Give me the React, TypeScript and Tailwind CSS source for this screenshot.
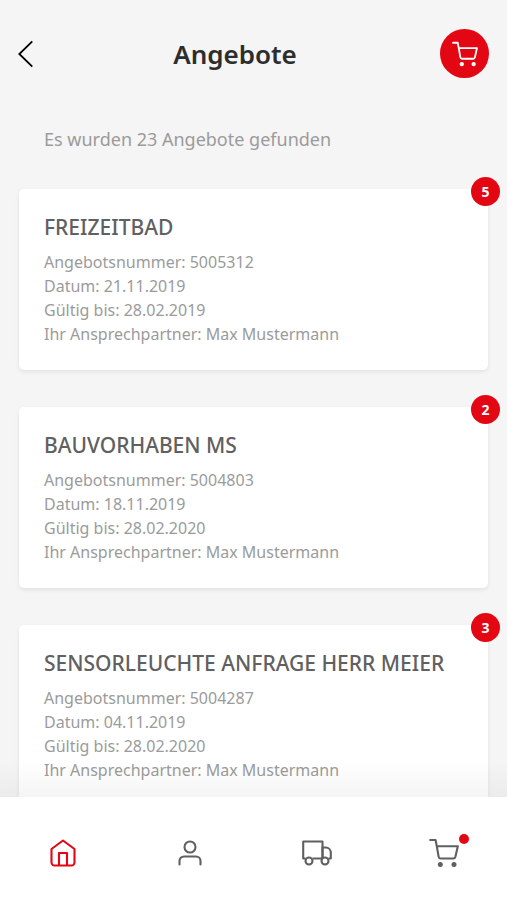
interface Offer {
  title: string;
  number: string;
  date: string;
  validUntil: string;
  contact: string;
  count: number;
}

const offers: Offer[] = [
  {
    title: 'FREIZEITBAD',
    number: '5005312',
    date: '21.11.2019',
    validUntil: '28.02.2019',
    contact: 'Max Mustermann',
    count: 5,
  },
  {
    title: 'BAUVORHABEN MS',
    number: '5004803',
    date: '18.11.2019',
    validUntil: '28.02.2020',
    contact: 'Max Mustermann',
    count: 2,
  },
  {
    title: 'SENSORLEUCHTE ANFRAGE HERR MEIER',
    number: '5004287',
    date: '04.11.2019',
    validUntil: '28.02.2020',
    contact: 'Max Mustermann',
    count: 3,
  },
];

export default function App() {
  return (
    <div className="flex h-screen flex-col bg-[#f5f5f5] font-['Noto_Sans','Open_Sans',sans-serif]">
      <header className="flex shrink-0 items-center px-[18px] pt-[29px]">
        <button className="flex h-12 w-4 shrink-0 items-center text-black" aria-label="Zurück">
          <BackIcon />
        </button>
        <h1 className="flex-1 pr-1 text-center text-[26px] leading-9 font-semibold text-[#2d2d2d]">
          Angebote
        </h1>
        <button
          className="flex size-[49px] items-center justify-center rounded-full bg-[#e30613] text-white"
          aria-label="Warenkorb"
        >
          <CartIcon className="size-[26px]" />
        </button>
      </header>

      <main className="min-h-0 flex-1 overflow-y-auto px-[19px] pt-[47px] [scrollbar-width:none]">
        <p className="px-[25px] text-lg leading-7 text-[#9b9b9b]">
          Es wurden 23 Angebote gefunden
        </p>
        <ul className="mt-9 flex flex-col gap-[37px] pb-9">
          {offers.map((offer) => (
            <OfferCard key={offer.number} offer={offer} />
          ))}
        </ul>
      </main>

      <BottomNav />
    </div>
  );
}

function OfferCard({ offer }: { offer: Offer }) {
  return (
    <li className="relative rounded-[5px] bg-white px-[25px] py-6 shadow-[0_2px_4px_rgba(0,0,0,0.08)]">
      <h2 className="mb-[9px] text-[21px] leading-7 font-medium text-[#606060]">
        {offer.title}
      </h2>
      <div className="text-base leading-6 text-[#9b9b9b]">
        <p>Angebotsnummer: {offer.number}</p>
        <p>Datum: {offer.date}</p>
        <p>Gültig bis: {offer.validUntil}</p>
        <p>Ihr Ansprechpartner: {offer.contact}</p>
      </div>

      {/* Position count */}
      <span className="absolute -top-3 -right-3 flex size-[29px] items-center justify-center rounded-full bg-[#e30613] text-sm font-bold text-white">
        {offer.count}
      </span>
    </li>
  );
}

function BottomNav() {
  return (
    <nav className="relative z-10 grid h-[103px] shrink-0 grid-cols-4 bg-white pt-2 text-[#606060]">
      {/* Fade over the end of the list */}
      <div className="pointer-events-none absolute inset-x-0 bottom-full h-9 bg-linear-to-t from-black/4 to-transparent" />

      <a href="#home" aria-label="Start" className="flex items-center justify-center text-[#e30613]">
        <HomeIcon />
      </a>
      <a href="#profile" aria-label="Profil" className="flex items-center justify-center">
        <UserIcon />
      </a>
      <a href="#orders" aria-label="Lieferungen" className="flex items-center justify-center">
        <TruckIcon />
      </a>
      <a href="#cart" aria-label="Warenkorb" className="flex items-center justify-center">
        <span className="relative">
          <CartIcon className="size-[30px]" />
          <span className="absolute -top-1 -right-[10px] size-[10px] rounded-full bg-[#e30613]" />
        </span>
      </a>
    </nav>
  );
}

function BackIcon() {
  return (
    <svg width="16" height="28" viewBox="0 0 16 28" fill="none" stroke="currentColor" strokeWidth="1.8">
      <path d="M14.3 1.3L1.3 14l13 12.7" />
    </svg>
  );
}

function CartIcon({ className }: { className: string }) {
  return (
    <svg className={className} viewBox="0 0 30 30" fill="none" stroke="currentColor" strokeWidth="2.1" strokeLinecap="round" strokeLinejoin="round">
      <path d="M1.2 2H6.6L7.8 8.2L9.6 18.6Q10 20.5 11.6 20.5H24.6Q26 20.5 26.5 18.6L28.8 8.2H7.8" />
      <circle cx="11.3" cy="26.6" r="2.5" fill="currentColor" stroke="none" />
      <circle cx="25" cy="26.6" r="2.5" fill="currentColor" stroke="none" />
    </svg>
  );
}

function HomeIcon() {
  return (
    <svg width="26" height="28" viewBox="0 0 26 28" fill="none" stroke="currentColor" strokeWidth="2.1" strokeLinejoin="round">
      <path d="M13 1.5L1.5 10v13.5a3 3 0 0 0 3 3h17a3 3 0 0 0 3-3V10z" />
      <path d="M9 26.5V14h8v12.5" />
    </svg>
  );
}

function UserIcon() {
  return (
    <svg width="24" height="26" viewBox="0 0 24 26" fill="none" stroke="currentColor" strokeWidth="2.1" strokeLinecap="round">
      <circle cx="12" cy="7" r="5.5" />
      <path d="M1.5 24.5V21a4.5 4.5 0 0 1 4.5-4.5h12a4.5 4.5 0 0 1 4.5 4.5v3.5" />
    </svg>
  );
}

function TruckIcon() {
  return (
    <svg width="30" height="26" viewBox="0 0 30 26" fill="none" stroke="currentColor" strokeWidth="2.1" strokeLinejoin="round">
      <path d="M3.5 18.5H1.2V1.5h19.3v17H10.5" />
      <path d="M20.5 18.5v-11h3.2c3 0 5.1 2.5 5.1 5.5v5.5h-2.3" />
      <circle cx="7" cy="21" r="3.5" />
      <circle cx="23" cy="21" r="3.5" />
    </svg>
  );
}
